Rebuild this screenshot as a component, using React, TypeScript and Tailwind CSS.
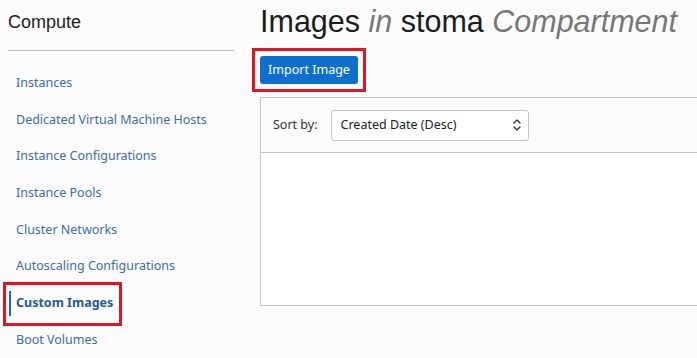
import React from "react";

const navItems = [
  "Instances",
  "Dedicated Virtual Machine Hosts",
  "Instance Configurations",
  "Instance Pools",
  "Cluster Networks",
  "Autoscaling Configurations",
  "Custom Images",
  "Boot Volumes",
];

export default function App() {
  return (
    <div className="w-[697px] h-[358px] overflow-hidden bg-[#fbfbfb] flex">
      <aside className="w-[234px] shrink-0 pl-2 pt-[12px]">
        <div className="text-[18px] leading-[21px] text-[#222] font-['Liberation_Sans',Arial,sans-serif]">
          Compute
        </div>
        <div className="mt-[17px] h-px bg-[#b9bcc0]" />
        <nav className="mt-[14px] flex flex-col font-['Noto_Sans',sans-serif] text-[12.5px]">
          {navItems.map((item) => {
            const active = item === "Custom Images";
            return (
              <div key={item} className="relative h-[36.7px] flex items-center">
                {active ? (
                  <>
                    <div className="absolute left-[1px] top-[6px] bottom-[6px] w-[2px] bg-[#2a64a3]" />
                    <span className="pl-2 font-bold text-[#235c98]">{item}</span>
                    <div className="absolute left-[-5px] top-[-3px] w-[119px] h-[44px] border-[3px] border-[#e3141f]" />
                  </>
                ) : (
                  <span className="pl-2 text-[#3a6ea6]">{item}</span>
                )}
              </div>
            );
          })}
        </nav>
      </aside>
      <main className="ml-[26px] flex-1 min-w-0 pt-[4px]">
        <h1 className="text-[30.5px] leading-[34px] text-[#1c1c1c] whitespace-nowrap font-['Liberation_Sans',Arial,sans-serif]">
          Images <span className="italic text-[#777]">in</span> stoma{" "}
          <span className="italic text-[#777]">Compartment</span>
        </h1>
        <div className="relative mt-[18px] w-[98px]">
          <button className="w-[98px] h-[28px] rounded-[3px] bg-[#0f6fcf] text-white text-[12.5px] font-['Noto_Sans',sans-serif]">
            Import Image
          </button>
          <div className="absolute left-[-8px] top-[-8px] w-[114px] h-[44px] border-[3px] border-[#e3141f]" />
        </div>
        <div className="mt-[13px] w-[460px] border border-[#c2c4c6] bg-white">
          <div className="h-[55px] bg-[#fbfbfb] border-b border-[#c2c4c6] flex items-center pl-[12px] font-['Noto_Sans',sans-serif] text-[12.5px]">
            <span className="text-[#333]">Sort by:</span>
            <div className="ml-[13px] w-[198px] h-[31px] bg-white border border-[#c2c4c6] rounded-[3px] flex items-center justify-between pl-[9px] pr-[6px] text-[#222]">
              <span>Created Date (Desc)</span>
              <svg width="10" height="14" viewBox="0 0 10 14" fill="none" stroke="#333" strokeWidth="1.4" strokeLinecap="round" strokeLinejoin="round">
                <path d="M2 5 L5 2 L8 5" />
                <path d="M2 9 L5 12 L8 9" />
              </svg>
            </div>
          </div>
          <div className="h-[152px]" />
        </div>
      </main>
    </div>
  );
}
